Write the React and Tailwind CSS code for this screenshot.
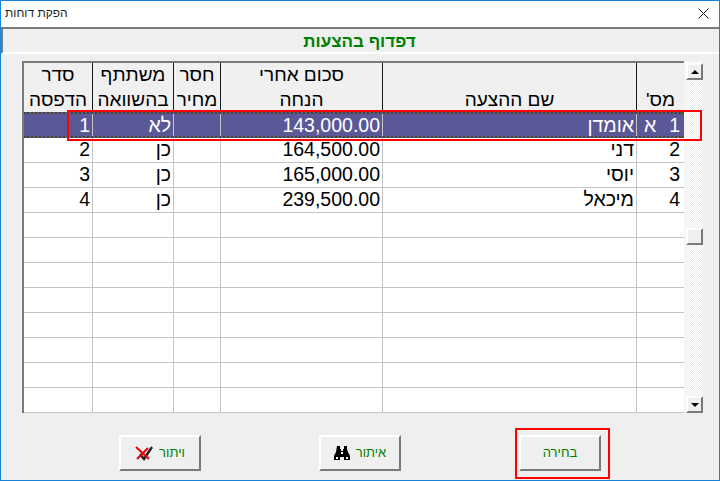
const columns = 'grid-cols-[69px_81px_47px_162px_254px_47px]'

const rows = [
  ['1', 'לא', '', '143,000.00', 'אומדן', '1', 'א'],
  ['2', 'כן', '', '164,500.00', 'דני', '2', ''],
  ['3', 'כן', '', '165,000.00', 'יוסי', '3', ''],
  ['4', 'כן', '', '239,500.00', 'מיכאל', '4', ''],
  ...Array.from({ length: 8 }, () => ['', '', '', '', '', '', '']),
]

const headers = [
  ['סדר', 'הדפסה'],
  ['משתתף', 'בהשוואה'],
  ['חסר', 'מחיר'],
  ['סכום אחרי', 'הנחה'],
  ['', 'שם ההצעה'],
  ['', "מס'"],
]

const HeaderCell = ({ lines, last }) => (
  <div
    dir="rtl"
    className={`flex flex-col items-center justify-end h-[49px] leading-[25px] text-black text-[19px] ${last ? '' : 'border-r border-[#1a1a1a]'}`}
  >
    {lines[0] && <span>{lines[0]}</span>}
    <span>{lines[1]}</span>
  </div>
)

const Row = ({ row, selected }) => (
  <div
    className={`grid ${columns} ${selected ? 'h-[26px] bg-[#5b5898] text-white border-y-2 border-dotted border-[#4a4620]' : 'h-[25px] text-black border-b border-[#c4c4c4]'}`}
  >
    {row.slice(0, 5).map((cell, i) => (
      <div
        key={i}
        className="text-right text-[19.5px] leading-[22px] pr-[2px] border-r border-[#c4c4c4]"
      >
        {cell}
      </div>
    ))}
    <div className="flex justify-end gap-[13px] pr-[4px] text-[19.5px] leading-[22px]">
      <span>{row[6]}</span>
      <span>{row[5]}</span>
    </div>
  </div>
)

const Button = ({ label, icon }) => (
  <button className="flex items-center justify-center gap-[6px] w-[82px] h-[36px] bg-[#efefef] border-2 border-t-white border-l-white border-r-[#7a7a7a] border-b-[#7a7a7a] text-[#008000] text-[13px]">
    {icon}
    <span dir="rtl">{label}</span>
  </button>
)

const CancelIcon = () => (
  <svg width="18" height="16" viewBox="0 0 18 16" className="shrink-0">
    <path d="M5 9l4 5L17 2" fill="none" stroke="#222" strokeWidth="2.4" />
    <path d="M1 2l13 12M2 14L13 3" fill="none" stroke="#f00000" strokeWidth="2" />
  </svg>
)

const BinocularsIcon = () => (
  <svg width="16" height="14" viewBox="0 0 16 14" className="shrink-0">
    <path
      d="M3 0h3v3h1v2h2V3h1V0h3v3l1 3 2 4v4H10v-3H6v3H0v-4l2-4z"
      fill="#000"
    />
    <path d="M2 11h2v2H2zM12 11h2v2h-2zM7 6h2v2H7z" fill="#fff" />
  </svg>
)

const ScrollButton = ({ children, className = '' }) => (
  <div className={`flex items-center justify-center w-[17px] h-[17px] bg-[#efefef] border-2 border-t-white border-l-white border-r-[#7a7a7a] border-b-[#7a7a7a] ${className}`}>
    {children}
  </div>
)

const Scrollbar = () => (
  <div className="flex flex-col justify-between w-[19px] h-[352px] pt-[2px] pl-[2px] bg-[repeating-conic-gradient(#ffffff_0_25%,#ececec_0_50%)] bg-[length:2px_2px]">
    <ScrollButton>
      <div className="w-0 h-0 border-x-[4px] border-x-transparent border-b-[4px] border-b-black" />
    </ScrollButton>
    <ScrollButton className="mb-[4px]" />
    <ScrollButton>
      <div className="w-0 h-0 border-x-[4px] border-x-transparent border-t-[4px] border-t-black" />
    </ScrollButton>
  </div>
)

export default function App() {
  return (
    <div className="relative w-[720px] h-[481px] flex flex-col bg-[#efefef] border border-[#1883d7] font-['Liberation_Sans',sans-serif] overflow-hidden">
      <div className="flex items-center justify-between h-[26px] shrink-0 bg-white pl-[4px] pr-[10px] pb-[2px]">
        <span dir="rtl" className="text-[12px] text-[#222]">הפקת דוחות</span>
        <svg width="11" height="11" viewBox="0 0 11 11">
          <path d="M0.5 0.5l10 10M10.5 0.5l-10 10" stroke="#222" strokeWidth="1" />
        </svg>
      </div>

      <div className="flex items-center justify-center h-[27px] shrink-0 pt-[3px] pr-[3px] bg-[#efefef] border-t-2 border-l-2 border-t-[#7a7a7a] border-l-[#7a7a7a] border-b-2 border-b-white">
        <span dir="rtl" className="text-[#008000] text-[17px] font-bold">דפדוף בהצעות</span>
      </div>

      <div className="flex pl-[21px] pt-[7px]">
        <div className="w-[662px] h-[352px] bg-white border-t-2 border-l-2 border-t-[#7a7a7a] border-l-[#7a7a7a]">
          <div className={`grid ${columns} bg-[#f0f0f0]`}>
            {headers.map((lines, i) => (
              <HeaderCell key={i} lines={lines} last={i === headers.length - 1} />
            ))}
          </div>
          {rows.map((row, i) => (
            <Row key={i} row={row} selected={i === 0} />
          ))}
        </div>
        <Scrollbar />
      </div>

      <div className="flex pl-[118px] pt-[22px] gap-[118px]">
        <Button label="ויתור" icon={<CancelIcon />} />
        <Button label="איתור" icon={<BinocularsIcon />} />
        <Button label="בחירה" />
      </div>

      <div className="absolute left-[66px] top-[109px] w-[635px] h-[31px] border-2 border-[#ff0000] pointer-events-none" />
      <div className="absolute left-[514px] top-[427px] w-[95px] h-[51px] border-2 border-[#ff0000] pointer-events-none" />
    </div>
  )
}
